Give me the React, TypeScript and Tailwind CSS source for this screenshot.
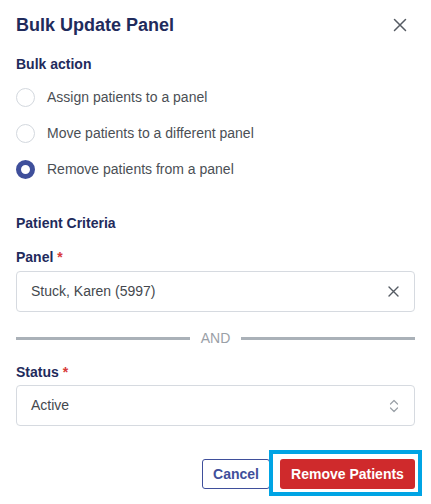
import React, { useState } from 'react';

const options = [
  'Assign patients to a panel',
  'Move patients to a different panel',
  'Remove patients from a panel',
];

export default function App() {
  const [action, setAction] = useState(2);

  return (
    <div className="w-[431px] h-[504px] bg-white px-4 flex flex-col font-[family-name:'Liberation_Sans',Arial,sans-serif] overflow-hidden">
      {/* Header */}
      <div className="h-[50px] flex items-center justify-between shrink-0">
        <h1 className="text-[18px] font-bold text-[#1f2b5c]">Bulk Update Panel</h1>
        <button className="w-[20px] h-[20px] flex items-center justify-center mr-[5px] text-[#555b63]">
          <svg width="14" height="14" viewBox="0 0 14 14" fill="none" stroke="currentColor" strokeWidth="1.5" strokeLinecap="round">
            <path d="M1.5 1.5 L12.5 12.5 M12.5 1.5 L1.5 12.5" />
          </svg>
        </button>
      </div>

      {/* Bulk action */}
      <div className="mt-[4px] text-[14px] leading-[20px] font-bold text-[#1f2b5c]">Bulk action</div>
      <div className="mt-[5px] flex flex-col">
        {options.map((label, i) => (
          <label key={label} className="h-[36px] flex items-center gap-[12px] cursor-pointer" onClick={() => setAction(i)}>
            <span
              className={`w-[19px] h-[19px] rounded-full box-border shrink-0 ${
                action === i ? 'border-[5px] border-[#3f4f9b] bg-white' : 'border border-[#d3d8de] bg-white'
              }`}
            />
            <span className="text-[14px] text-[#4b4f55]">{label}</span>
          </label>
        ))}
      </div>

      {/* Patient Criteria */}
      <div className="mt-[26px] text-[14px] leading-[20px] font-bold text-[#1f2b5c]">Patient Criteria</div>

      <div className="mt-[14px] text-[14px] leading-[20px] font-bold text-[#1f2b5c]">
        Panel <span className="text-[#d83a3a]">*</span>
      </div>
      <div className="mt-[4px] h-[41px] border border-[#d6dae0] rounded-[4px] flex items-center justify-between pl-[14px] pr-[15px]">
        <span className="text-[14px] text-[#44484e]">Stuck, Karen (5997)</span>
        <svg width="11" height="11" viewBox="0 0 11 11" fill="none" stroke="#555b63" strokeWidth="1.4" strokeLinecap="round">
          <path d="M1 1 L10 10 M10 1 L1 10" />
        </svg>
      </div>

      {/* AND divider */}
      <div className="mt-[16px] h-[20px] flex items-center gap-[11px]">
        <div className="flex-1 h-[3px] bg-[#aab1b8]" />
        <span className="text-[14px] text-[#9aa0a7]">AND</span>
        <div className="flex-1 h-[3px] bg-[#aab1b8]" />
      </div>

      <div className="mt-[14px] text-[14px] leading-[20px] font-bold text-[#1f2b5c]">
        Status <span className="text-[#d83a3a]">*</span>
      </div>
      <div className="mt-[3px] h-[41px] border border-[#d6dae0] rounded-[4px] flex items-center justify-between pl-[14px] pr-[15px]">
        <span className="text-[14px] text-[#44484e]">Active</span>
        <svg width="10" height="16" viewBox="0 0 10 16" fill="none" stroke="#9aa0a7" strokeWidth="1.2" strokeLinecap="round" strokeLinejoin="round">
          <path d="M1.5 6 L5 2.5 L8.5 6" />
          <path d="M1.5 10 L5 13.5 L8.5 10" />
        </svg>
      </div>

      {/* Footer */}
      <div className="mt-[33px] flex justify-end items-center gap-[10px]">
        <button className="h-[30px] w-[68px] border border-[#3f4f9b] rounded-[3px] text-[14px] leading-[20px] font-bold text-[#3f4f9b] bg-white whitespace-nowrap">
          Cancel
        </button>
        <div className="relative">
          <button className="h-[30px] w-[135px] rounded-[3px] text-[14px] leading-[20px] font-bold text-white bg-[#cf2a2c] whitespace-nowrap">
            Remove Patients
          </button>
          <div className="absolute left-[-11px] right-[-7px] top-[-9px] bottom-[-7px] border-[4px] border-[#00a4e4] pointer-events-none" />
        </div>
      </div>
    </div>
  );
}
